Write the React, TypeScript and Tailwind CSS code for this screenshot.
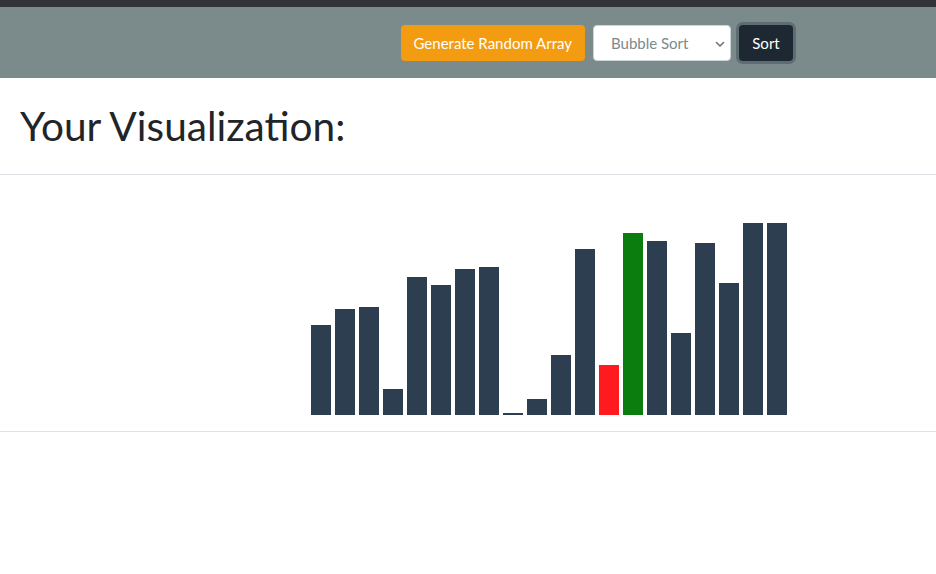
import React from "react";

const heights = [90, 106, 108, 26, 138, 130, 146, 148, 2, 16, 60, 166, 50, 182, 174, 82, 172, 132, 192, 192];

const barColor = (i: number) => {
  if (i === 12) return "bg-[#ff1a1f]";
  if (i === 13) return "bg-[#0b7c0e]";
  return "bg-[#2c3e50]";
};

export default function App() {
  return (
    <div className="min-h-[574px] bg-white font-['Lato',sans-serif] text-[#212529]">
      <div className="h-[7px] bg-[#323336]" />
      <nav className="h-[71px] bg-[#7b8a8b] flex items-center justify-end pr-[143px] gap-2">
        <button className="h-9 px-[13px] pt-[2px] rounded-[4px] bg-[#f39c12] text-white text-[15px]">
          Generate Random Array
        </button>
        <div className="relative h-9 w-[138px] pt-[2px] rounded-[4px] bg-white border border-[#ced4da] flex items-center pl-[17px] text-[15px] text-[#7b8a8b]">
          Bubble Sort
          <svg
            className="absolute right-[5px] top-[15px]"
            width="10"
            height="7"
            viewBox="0 0 10 7"
            fill="none"
            stroke="#6b7778"
            strokeWidth="1.6"
            strokeLinecap="round"
            strokeLinejoin="round"
          >
            <path d="M1.5 1.5 5 5l3.5-3.5" />
          </svg>
        </div>
        <button className="h-9 w-[54px] pt-[2px] rounded-[4px] bg-[#1e2833] text-white text-[15px] ring-[3px] ring-[#5e6d72]">
          Sort
        </button>
      </nav>
      <div className="h-[97px] border-b border-[#dee2e6] flex items-center pl-5">
        <h1 className="text-[40.6px] leading-none">Your Visualization:</h1>
      </div>
      <div className="h-[257px] border-b border-[#dee2e6] flex items-end pl-[311px] pb-4 gap-1">
        {heights.map((h, i) => (
          <div key={i} className={`w-5 ${barColor(i)}`} style={{ height: h }} />
        ))}
      </div>
    </div>
  );
}
